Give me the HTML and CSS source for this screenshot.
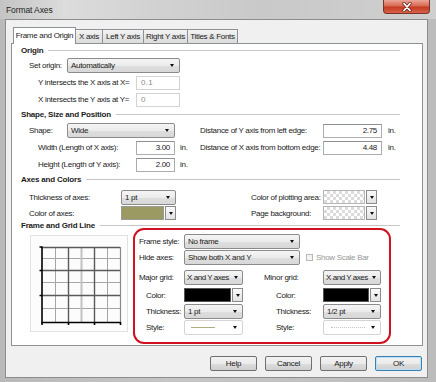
FILE: index.html
```html
<!DOCTYPE html>
<html lang="en">
<head>
  <meta charset="UTF-8" />
  <title>Format Axes</title>
  <meta name="viewport" content="width=device-width,initial-scale=1" />
  <link rel="stylesheet" href="styles.css">
</head>
<body>
  <div class="window">
    <div class="titlebar">
      <span class="title">Format Axes</span>
      <div class="close">
        <svg width="14" height="10" viewBox="0 0 14 10">
          <path d="M4 1.5 L10 8.5 M10 1.5 L4 8.5" stroke="#6a231a" stroke-width="3.4" stroke-linecap="round"/>
          <path d="M4 1.5 L10 8.5 M10 1.5 L4 8.5" stroke="#fff" stroke-width="1.8" stroke-linecap="round"/>
        </svg>
      </div>
    </div>

    <div class="client">
      <div class="tabs">
        <div class="tab active t1">Frame and Origin</div>
        <div class="tab t2">X axis</div>
        <div class="tab t3">Left Y axis</div>
        <div class="tab t4">Right Y axis</div>
        <div class="tab t5">Titles &amp; Fonts</div>
      </div>

      <div class="panel">
        <!-- Origin -->
        <div class="sec-head">Origin</div>
        <div class="row">
          <div class="left">
            <span class="lbl w38">Set origin:</span>
            <div class="combo w113">Automatically</div>
          </div>
        </div>
        <div class="row">
          <div class="left ind">
            <span class="lbl w98">Y intersects the X axis at X=</span>
            <div class="field dis w44">0.1</div>
          </div>
        </div>
        <div class="row">
          <div class="left ind">
            <span class="lbl w98">X intersects the Y axis at Y=</span>
            <div class="field dis w44">0</div>
          </div>
        </div>

        <!-- Shape -->
        <div class="sec-head">Shape, Size and Position</div>
        <div class="row first">
          <div class="left">
            <span class="lbl w38">Shape:</span>
            <div class="combo w108">Wide</div>
          </div>
          <div class="right">
            <span class="lbl w123">Distance of Y axis from left edge:</span>
            <div class="field num w59">2.75</div>
            <span class="unit wide">in.</span>
          </div>
        </div>
        <div class="row">
          <div class="left ind">
            <span class="lbl w98">Width (Length of X axis):</span>
            <div class="field num w39">3.00</div>
            <span class="unit">in.</span>
          </div>
          <div class="right">
            <span class="lbl w123">Distance of X axis from bottom edge:</span>
            <div class="field num w59">4.48</div>
            <span class="unit wide">in.</span>
          </div>
        </div>
        <div class="row">
          <div class="left ind">
            <span class="lbl w98">Height (Length of Y axis):</span>
            <div class="field num w39">2.00</div>
            <span class="unit">in.</span>
          </div>
        </div>

        <!-- Axes and colors -->
        <div class="sec-head">Axes and Colors</div>
        <div class="row axes first">
          <div class="left">
            <span class="lbl w92">Thickness of axes:</span>
            <div class="combo w55">1 pt</div>
          </div>
          <div class="right pad">
            <span class="lbl w72">Color of plotting area:</span>
            <div class="swatch w54"><span class="chip checker"></span><span class="drop"></span></div>
          </div>
        </div>
        <div class="row axes">
          <div class="left">
            <span class="lbl w92">Color of axes:</span>
            <div class="swatch w55"><span class="chip olive"></span><span class="drop"></span></div>
          </div>
          <div class="right pad">
            <span class="lbl w72">Page background:</span>
            <div class="swatch w54"><span class="chip checker"></span><span class="drop"></span></div>
          </div>
        </div>

        <!-- Frame and grid -->
        <div class="sec-head tight">Frame and Grid Line</div>
        <div class="frame-body">
          <div class="preview">
            <svg width="96" height="95" viewBox="0 0 96 95" fill="none">
              <g stroke="#a6a6a6" stroke-width="1">
                <path d="M24.5 11 V86 M76.5 11 V86 M11 22.5 H89 M11 46.5 H89 M11 72.5 H89"/>
              </g>
              <path d="M50.5 11 V86" stroke="#c2c2c2" stroke-width="2"/>
              <g stroke="#5a5a5a" stroke-width="1.4">
                <path d="M37.5 11 V86 M63.5 11 V86 M11 11.5 H89 M11 34.5 H89 M11 59.5 H89"/>
              </g>
              <path d="M89.5 11 V86" stroke="#8a8a8a" stroke-width="1.2"/>
              <g stroke="#000" stroke-width="1.6">
                <path d="M11 10.5 V86.5 H90"/>
                <path d="M8.5 11 H11 M8.5 34.5 H11 M8.5 59.5 H11 M11 86 V89 M37.5 86 V89 M63.5 86 V89 M89.5 86 V89"/>
              </g>
            </svg>
          </div>

          <div class="redbox">
            <div class="rrow">
              <span class="rl">Frame style:</span>
              <div class="combo w116">No frame</div>
            </div>
            <div class="rrow">
              <span class="rl">Hide axes:</span>
              <div class="combo w116">Show both X and Y</div>
              <span class="check"></span>
              <span class="check-lbl">Show Scale Bar</span>
            </div>
            <div class="rrow gap4">
              <span class="rl">Major grid:</span>
              <div class="combo w59 snug">X and Y axes</div>
              <span class="rl2">Minor grid:</span>
              <div class="combo w58 snug">X and Y axes</div>
            </div>
            <div class="rrow gap2">
              <span class="rl sub">Color:</span>
              <div class="swatch w59"><span class="chip black"></span><span class="drop"></span></div>
              <span class="rl2 sub">Color:</span>
              <div class="swatch w58"><span class="chip black"></span><span class="drop"></span></div>
            </div>
            <div class="rrow">
              <span class="rl sub">Thickness:</span>
              <div class="combo w59">1 pt</div>
              <span class="rl2 sub">Thickness:</span>
              <div class="combo w58">1/2 pt</div>
            </div>
            <div class="rrow">
              <span class="rl sub">Style:</span>
              <div class="style-box w59"><span class="line solid"></span></div>
              <span class="rl2 sub">Style:</span>
              <div class="style-box w58"><span class="line dotted"></span></div>
            </div>
          </div>
        </div>
      </div>

      <div class="buttons">
        <div class="btn">Help</div>
        <div class="btn">Cancel</div>
        <div class="btn">Apply</div>
        <div class="btn ok">OK</div>
      </div>
    </div>
  </div>
</body>
</html>
```

FILE: styles.css
```css
* { box-sizing: border-box; }
body {
  margin: 0;
  font-family: "Liberation Sans", Arial, sans-serif;
  font-size: 8px;
  letter-spacing: -0.3px;
  color: #1b1b1b;
}
.window {
  width: 436px; height: 382px;
  background: linear-gradient(90deg, #b9b9b9, #c6c6c6 40%, #bcbcbc);
  display: flex; flex-direction: column;
  overflow: hidden;
}
.titlebar {
  height: 19px;
  display: flex; align-items: flex-start;
  background: linear-gradient(90deg, #c4c4c4 0%, #dcdcdc 15%, #d2d2d2 35%, #c9c9c9 60%, #cfcfcf 100%);
}
.title { margin: 5px 0 0 6px; font-size: 8.5px; letter-spacing: -0.1px; color: #1e1e1e; }
.close {
  margin-left: auto; margin-right: 6px;
  width: 47px; height: 14px;
  border: 1px solid #7a3328; border-top: none;
  border-radius: 0 0 4px 4px;
  background: linear-gradient(#eba596, #d86a52 45%, #c63a22 55%, #d8634a);
  display: flex; justify-content: center; align-items: center;
}
.client {
  margin: 0 8px 4px 5px;
  flex: 1;
  background: #f0f0f0;
  border: 1px solid #8c8c8c;
  padding: 7px 4px 0 5px;
}

/* tabs */
.tabs { display: flex; align-items: flex-end; height: 16px; padding-left: 2px; }
.tab {
  height: 14px;
  border: 1px solid #8e9298; border-bottom: none;
  background: linear-gradient(#f4f4f4, #e6e6e6 50%, #dcdcdc);
  margin-left: -1px;
  display: flex; align-items: center; justify-content: center;
  white-space: nowrap;
}
.tab.active {
  height: 17px; margin-left: 0; margin-bottom: -1px;
  background: #fff;
  position: relative; z-index: 1;
  padding-bottom: 2px;
}
.t1 { width: 63px; }
.t2 { width: 28px; }
.t3 { width: 42px; }
.t4 { width: 45px; }
.t5 { width: 51px; }

.panel {
  height: 303px;
  background: #fff;
  border: 1px solid #8e9298;
  padding: 0 22px 0 9px;
}
.sec-head {
  height: 13px;
  display: flex; align-items: center;
  font-weight: bold;
  letter-spacing: -0.2px;
}
.sec-head::after {
  content: ""; flex: 1; height: 1px;
  background: #c6c6c6; margin-left: 5px;
}
.sec-head.tight { margin-top: -2px; }

.row { display: flex; align-items: center; height: 17px; }
.row.first { margin-top: 1px; }
.row.axes { height: 16px; }
.row.axes.first { margin-top: 3px; }
.left { width: 179px; display: flex; align-items: center; padding-left: 8px; }
.left.ind { padding-left: 17px; }
.right { display: flex; align-items: center; }
.right.pad { padding-left: 51px; }
.lbl { white-space: nowrap; }
.unit { margin-left: 5px; }
.unit.wide { margin-left: 6px; }

.w38 { width: 38px; } .w39 { width: 39px; } .w44 { width: 44px; }
.w54 { width: 54px; } .w55 { width: 55px; } .w58 { width: 58px; }
.w59 { width: 59px; } .w72 { width: 72px; } .w92 { width: 92px; }
.w98 { width: 98px; } .w108 { width: 108px; } .w113 { width: 113px; }
.w116 { width: 116px; } .w123 { width: 123px; }

.combo {
  height: 15px; flex: none;
  border: 1px solid #8b8b8b; border-radius: 2px;
  background: linear-gradient(#f5f5f5, #ebebeb 50%, #dedede 51%, #d8d8d8);
  display: flex; align-items: center;
  padding-left: 3px;
  white-space: nowrap; overflow: hidden;
}
.combo::after {
  content: ""; margin-left: auto; margin-right: 5px; flex: none;
  border-left: 2.5px solid transparent; border-right: 2.5px solid transparent;
  border-top: 3px solid #111;
}
.combo.snug { padding-left: 2px; letter-spacing: -0.45px; }
.combo.snug::after { margin-right: 4px; }
.field {
  height: 14px; flex: none;
  border: 1px solid #abadb3; border-top-color: #8d8f96;
  background: #fff;
  display: flex; align-items: center;
  padding: 0 4px;
}
.field.num { justify-content: flex-end; }
.field.dis { color: #8c8c8c; border-color: #d3d3d3; letter-spacing: 0.3px; }

.swatch { height: 14px; display: flex; flex: none; }
.chip { flex: 1; border: 1px solid #9a9a9a; }
.chip.olive { background: #9b9a63; }
.chip.black { background: #000; border-color: #555; }
.chip.checker {
  background: repeating-conic-gradient(#dcdcdc 0 25%, #fff 0 50%) 0 0 / 6px 6px;
  border-color: #b5b5b5;
}
.drop {
  width: 11px; margin-left: 1px;
  border: 1px solid #8b8b8b;
  background: linear-gradient(#fafafa, #e2e2e2);
  display: flex; align-items: center; justify-content: center;
}
.drop::after {
  content: "";
  border-left: 2.5px solid transparent; border-right: 2.5px solid transparent;
  border-top: 3px solid #111;
}

/* frame and grid */
.frame-body { display: flex; align-items: flex-start; margin-top: -4px; }
.preview {
  margin: 7px 0 0 9px;
  width: 98px; height: 97px;
  border: 1px solid #e2e2e2;
  background: #fcfcfc;
}
.preview svg { display: block; }
.redbox {
  margin-left: 5px;
  width: 258px; height: 116px;
  border: 2px solid #d0121f;
  border-radius: 11px;
  padding: 3px 0 0 4px;
}
.rrow { display: flex; align-items: center; height: 16px; }
.rrow.gap4 { margin-top: 4px; }
.rrow.gap2 { margin-top: 2px; }
.rl { width: 45px; white-space: nowrap; }
.rl2 { width: 80px; padding-left: 21px; white-space: nowrap; }
.rl.sub { padding-left: 7px; }
.rl2.sub { padding-left: 33px; }
.check {
  width: 7px; height: 7px; margin-left: 6px;
  border: 1px solid #b9b9b9; background: #f3f3f3;
}
.check-lbl { margin-left: 3px; color: #979797; white-space: nowrap; }
.style-box {
  height: 15px; flex: none;
  border: 1px solid #d4d4d4; border-radius: 2px;
  background: #fff;
  display: flex; align-items: center;
  padding-left: 6px;
}
.style-box::after {
  content: ""; margin-left: auto; margin-right: 5px;
  border-left: 2.5px solid transparent; border-right: 2.5px solid transparent;
  border-top: 3px solid #111;
}
.line { height: 0; }
.line.solid { width: 24px; border-top: 1px solid #b0ad7c; }
.line.dotted { width: 34px; margin-left: 1px; border-top: 1px dotted #c4c4c4; }

/* dialog buttons */
.buttons {
  display: flex; justify-content: flex-end; gap: 8px;
  margin: 10px 1px 0 0;
}
.btn {
  width: 47px; height: 15px;
  border: 1px solid #707070; border-radius: 2px;
  background: linear-gradient(#f2f2f2, #ebebeb 50%, #dddddd 51%, #cfcfcf);
  display: flex; align-items: center; justify-content: center;
}
.btn.ok { border-color: #3c7fb1; box-shadow: inset 0 0 0 1px #b9e1f7; }
```
